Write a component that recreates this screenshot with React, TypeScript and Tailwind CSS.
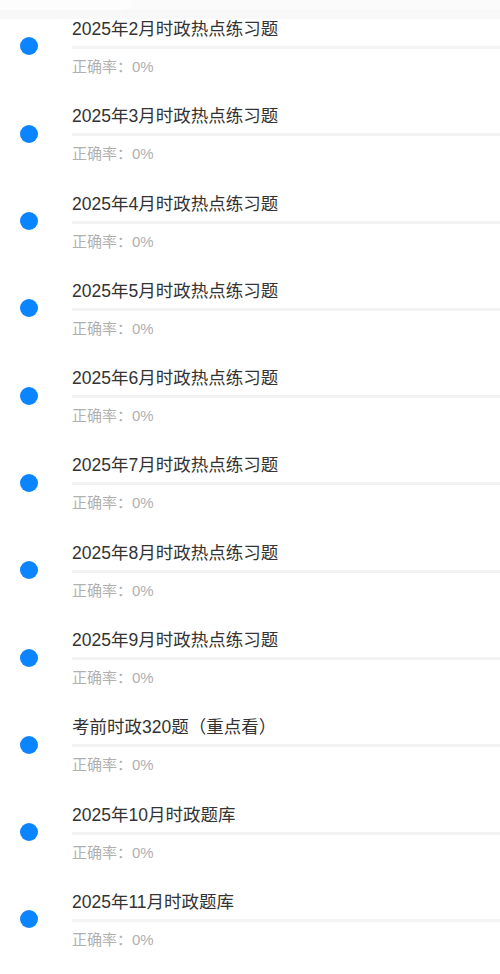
import React from "react";

const items = [
  "2025年2月时政热点练习题",
  "2025年3月时政热点练习题",
  "2025年4月时政热点练习题",
  "2025年5月时政热点练习题",
  "2025年6月时政热点练习题",
  "2025年7月时政热点练习题",
  "2025年8月时政热点练习题",
  "2025年9月时政热点练习题",
  "考前时政320题（重点看）",
  "2025年10月时政题库",
  "2025年11月时政题库",
];

const font = {
  fontFamily: '"Liberation Sans", "Noto Sans CJK SC", sans-serif',
};

const App: React.FC = () => {
  return (
    <div className="relative w-[500px] h-[974px] bg-white overflow-hidden" style={font}>
      {/* header strip left over the list */}
      <div className="absolute top-0 left-0 right-0 h-[19px] bg-[#f8f8f8] z-10">
        <div className="h-[9px] bg-[#fbfbfb]" />
        <div className="absolute top-0 left-0 w-[133px] h-[10px] bg-[#fdfdfd] rounded-br-[12px]" />
      </div>

      <div className="pt-[2.85px]">
        {items.map((title) => (
          <div key={title} className="flex items-center h-[87.3px]">
            <div className="w-[72px] shrink-0 flex">
              <span className="ml-5 w-[18px] h-[18px] rounded-full bg-[#0a84ff]" />
            </div>
            <div className="flex-1 flex flex-col pt-[1px]">
              <div className="text-[17.5px] leading-[24px] text-[#333333]">{title}</div>
              <div className="mt-[5px] h-[3px] bg-[#f3f3f3]" />
              <div className="mt-[8px] text-[15px] leading-[20px] text-[#b0b0b0]">正确率：0%</div>
            </div>
          </div>
        ))}
      </div>
    </div>
  );
};

export default App;
